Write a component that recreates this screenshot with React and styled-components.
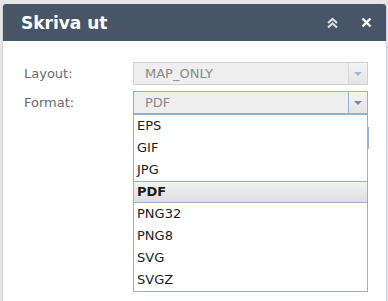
import React from 'react';
import styled, { createGlobalStyle } from 'styled-components';

const GlobalStyle = createGlobalStyle`
  html, body {
    margin: 0;
    padding: 0;
    background: #e6e6e3;
  }
  body {
    font-family: "DejaVu Sans", Verdana, sans-serif;
  }
`;

const Page = styled.div`
  height: 301px;
  padding: 4px 0 0 3px;
  box-sizing: border-box;
  overflow: hidden;
`;

const Dialog = styled.div`
  width: 383px;
  height: 297px;
  background: #ffffff;
  border-radius: 3px 3px 0 0;
  box-shadow: 1px 0 0 #c9d8ea, -1px 0 0 #d2d2d2;
`;

const Header = styled.div`
  height: 37px;
  background: #475567;
  border-radius: 3px 3px 0 0;
  display: flex;
  align-items: center;
  padding: 0 14px 0 18px;
`;

const Title = styled.div`
  flex: 1;
  color: #ffffff;
  font-weight: bold;
  font-size: 17px;
`;

const Tools = styled.div`
  display: flex;
  align-items: center;
  gap: 22px;
`;

const Body = styled.div`
  padding: 21px 0 0 21px;
  display: flex;
  flex-direction: column;
  gap: 6px;
`;

const Row = styled.div`
  display: grid;
  grid-template-columns: 109px 235px;
  align-items: center;
  height: 23px;
`;

const Label = styled.span`
  font-size: 13px;
  color: #6b6b6b;
`;

const SelectWrap = styled.div`
  position: relative;
  height: 23px;
`;

const Select = styled.div`
  height: 23px;
  box-sizing: border-box;
  display: flex;
  border: 1px solid ${p => (p.$focus ? '#94b0cf' : '#cfcfcf')};
  background: #eeeeee;
`;

const Value = styled.div`
  flex: 1;
  padding-left: 11px;
  font-size: 13px;
  line-height: 21px;
  color: #8a8a8a;
`;

const Trigger = styled.div`
  width: 18px;
  border-left: 1px solid ${p => (p.$focus ? '#94b0cf' : '#d6d6d6')};
  background: linear-gradient(#f4f4f4, #e4e4e4);
  display: flex;
  align-items: center;
  justify-content: center;
`;

const Arrow = styled.div`
  width: 0;
  height: 0;
  border-left: 4px solid transparent;
  border-right: 4px solid transparent;
  border-top: 4px solid ${p => (p.$focus ? '#6d8bb0' : '#a7b6c8')};
  margin-top: 1px;
`;

const List = styled.ul`
  position: absolute;
  top: 23px;
  left: 0;
  width: 235px;
  box-sizing: border-box;
  margin: 0;
  padding: 0;
  list-style: none;
  background: #ffffff;
  border: 1px solid #94b0cf;
  z-index: 2;
`;

const Option = styled.li`
  height: 22px;
  box-sizing: border-box;
  line-height: ${p => (p.$selected ? '20px' : '22px')};
  padding-left: 3px;
  font-size: 13px;
  color: #1c1c1c;
  font-weight: ${p => (p.$selected ? 'bold' : 'normal')};
  background: ${p => (p.$selected ? 'linear-gradient(#f2f2f2, #dedede)' : 'transparent')};
  border-top: ${p => (p.$selected ? '1px solid #94b0cf' : 'none')};
  border-bottom: ${p => (p.$selected ? '1px solid #94b0cf' : 'none')};
`;

const ButtonRow = styled.div`
  display: grid;
  grid-template-columns: 109px 236px;
  margin-top: 7px;
`;

const HiddenButton = styled.div`
  grid-column: 2;
  height: 22px;
  box-sizing: border-box;
  border: 1px solid #8fb3da;
  background: #ffffff;
`;

const formats = ['EPS', 'GIF', 'JPG', 'PDF', 'PNG32', 'PNG8', 'SVG', 'SVGZ'];

const CollapseIcon = () => (
  <svg width="13" height="12" viewBox="0 0 13 12">
    <path d="M2 6 L6.5 2 L11 6 M2 10.5 L6.5 6.5 L11 10.5" fill="none" stroke="#d8dde4" strokeWidth="2.2" />
  </svg>
);

const CloseIcon = () => (
  <svg width="11" height="11" viewBox="0 0 11 11">
    <path d="M1.5 1.5 L9.5 9.5 M9.5 1.5 L1.5 9.5" fill="none" stroke="#ffffff" strokeWidth="2.4" />
  </svg>
);

export default function App() {
  return (
    <>
      <GlobalStyle />
      <Page>
        <Dialog>
          <Header>
            <Title>Skriva ut</Title>
            <Tools>
              <CollapseIcon />
              <CloseIcon />
            </Tools>
          </Header>
          <Body>
            <Row>
              <Label>Layout:</Label>
              <SelectWrap>
                <Select>
                  <Value>MAP_ONLY</Value>
                  <Trigger>
                    <Arrow />
                  </Trigger>
                </Select>
              </SelectWrap>
            </Row>
            <Row>
              <Label>Format:</Label>
              <SelectWrap>
                <Select $focus>
                  <Value>PDF</Value>
                  <Trigger $focus>
                    <Arrow $focus />
                  </Trigger>
                </Select>
                <List>
                  {formats.map(f => (
                    <Option key={f} $selected={f === 'PDF'}>
                      {f}
                    </Option>
                  ))}
                </List>
              </SelectWrap>
            </Row>
            <ButtonRow>
              <HiddenButton />
            </ButtonRow>
          </Body>
        </Dialog>
      </Page>
    </>
  );
}
